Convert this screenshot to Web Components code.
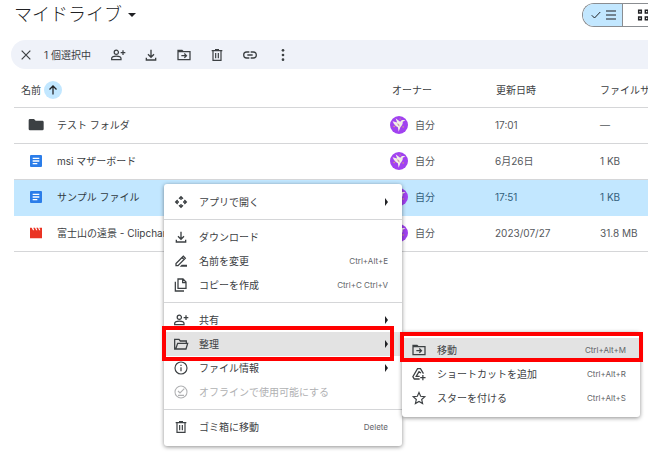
<!DOCTYPE html>
<html lang="ja">
<head>
<meta charset="utf-8">
<title>マイドライブ</title>
<style>
  html, body { margin: 0; }
  body {
    min-height: 100vh;
    background: #fff;
    color: #3c4043;
    font: 10px/16px Inter, "Noto Sans CJK JP", sans-serif;
    --ink: #3c4043;
    --line: #d5d6d8;
    --accent: #c2e7ff;
  }
</style>
</head>
<body>
<drive-page></drive-page>
<script>
const ICONS = {
  close: '<path d="M5.500 5.500l13 13M18.500 5.500l-13 13" stroke="currentColor" stroke-width="1.800" fill="none"/>',
  share: '<g fill="none" stroke="currentColor" stroke-width="1.900"><circle cx="9.500" cy="8" r="3.200"/><path d="M2.500 19v-1.600c0-2.400 4-3.600 7-3.600s7 1.200 7 3.600V19zM19.500 5v7M16 8.500h7"/></g>',
  download: '<path fill="none" stroke="currentColor" stroke-width="2" d="M12 4v11M7.500 11l4.500 4.500 4.500-4.500M5 16v3.500h14V16"/>',
  move: '<path fill="none" stroke="currentColor" stroke-width="1.900" d="M3 5h6l2 2h10v12H3zM3 7h8"/><path fill="none" stroke="currentColor" stroke-width="1.900" d="M8 13h7M12.500 9.800l3.200 3.200-3.200 3.200"/>',
  trash: '<path fill="none" stroke="currentColor" stroke-width="1.800" d="M6 6v14h12V6M4 5.500h16M9 3.800h6M10 9v8M14 9v8"/>',
  link: '<path fill="none" stroke="currentColor" stroke-width="1.900" d="M11 7.500H7a4.500 4.500 0 0 0 0 9h4M13 7.500h4a4.500 4.500 0 0 1 0 9h-4M8 12h8"/>',
  more: '<g fill="currentColor"><circle cx="12" cy="5" r="2"/><circle cx="12" cy="12" r="2"/><circle cx="12" cy="19" r="2"/></g>',
  check: '<path fill="none" stroke="currentColor" stroke-width="2" d="M3.500 12.500l5.500 5.500L20.500 6"/>',
  list: '<path stroke="currentColor" stroke-width="2.200" d="M2 4h20M2 12h20M2 20h20"/>',
  grid: '<g fill="none" stroke="currentColor" stroke-width="2.200"><path d="M4 5h4v4H4zM14 5h4v4h-4zM4 15h4v4H4zM14 15h4v4h-4z"/></g>',
  up: '<path fill="none" stroke="currentColor" stroke-width="2.500" d="M12 21V4M5 11l7-7 7 7"/>',
  open: '<g fill="none" stroke="currentColor" stroke-width="2"><path d="M9 7l3-3 3 3M9 17l3 3 3-3M7 9l-3 3 3 3M17 9l3 3-3 3M12 4v5M12 15v5M4 12h5M15 12h5"/></g>',
  rename: '<path fill="none" stroke="currentColor" stroke-width="1.900" d="M4.500 19v-3.200L15.500 4.800l3 3L7.500 19zM13.500 6.800l3 3"/><path d="M13 17.500h8V20.500H10z" fill="currentColor"/>',
  copy: '<path fill="none" stroke="currentColor" stroke-width="1.900" d="M7.500 3h7.500l4.500 4.500V17h-12zM14.500 3v5.500h5M3.500 7v14h13"/>',
  folderOpen: '<path fill="none" stroke="currentColor" stroke-width="1.900" d="M4 19.500H2.500V5H9l2 2.500h9V11M4 19.500 7 11h15L19.500 19.500z"/>',
  info: '<circle cx="12" cy="12" r="9" fill="none" stroke="currentColor" stroke-width="1.700"/><path d="M11.100 11h1.800v6h-1.800zM11.100 7h1.800v2h-1.800z" fill="currentColor"/>',
  offline: '<circle cx="12" cy="12" r="9" fill="none" stroke="currentColor" stroke-width="1.600"/><path fill="none" stroke="currentColor" stroke-width="1.700" d="M7.500 10.500l3 3L17 7M7.500 17h9"/>',
  shortcut: '<path fill="none" stroke="currentColor" stroke-width="1.900" d="M13 19.500H5L2.800 16 9.800 4h4.400l4.500 7.500M15 10.500l-3-2-4.200 7H13M17.800 13.500v8M13.800 17.500h8"/>',
  star: '<path fill="none" stroke="currentColor" stroke-width="1.700" d="M12 3.800l2.500 5.700 6.200.6-4.700 4.100 1.400 6.100L12 17.100l-5.400 3.200L8 14.200 3.300 10.100l6.200-.6z"/>',
  folder: '<path fill="#3c4043" d="M1 5a2 2 0 0 1 2-2h6l2.500 2.500H22a2 2 0 0 1 1.500 2v10.500a2 2 0 0 1-2 2H3a2 2 0 0 1-2-2z"/>',
  doc: '<rect x="3" y="3" width="18" height="18" rx="1.500" fill="#2b7de9"/><path stroke="#fff" stroke-width="2" d="M7 8h10M7 12h10M7 16h7"/>',
  video: '<path fill="#ea3323" d="M3 4h2.500l2 4h1.800L8 4h2.500l1.700 4H14l-1.500-4H15l1.700 4h1.800L17 4h4v16H3z"/>',
  avatar: '<circle cx="12" cy="12" r="12" fill="#a142f0"/><path fill="#f3eee6" d="M3.500 7l6 1.500L7.500 3l6 4.500 2-1.800c1.500-1 3.200-.2 5-.2l-3.500 2.300c.2 3.200-1.200 5.400-3.200 7.200L11.500 21l-1-6C8.500 14 5 11.500 3.500 7z"/><path fill="#c9a7a0" d="M9 9.500l3 1 1 3.500-2-1z"/><g fill="#e9c44e"><circle cx="17.500" cy="14.500" r=".9"/><circle cx="5.500" cy="14" r=".9"/><circle cx="13.500" cy="4" r=".8"/></g>'
};

const define = (name, css, html, setup) => {
  const template = document.createElement('template');
  template.innerHTML = `<style>*{box-sizing:border-box}button{font:inherit;color:inherit;background:none;border:0;margin:0;padding:0}${css}</style>${html}`;
  customElements.define(name, class extends HTMLElement {
    connectedCallback() {
      if (this.shadowRoot) return;
      this.attachShadow({ mode: 'open' }).append(template.content.cloneNode(true));
      if (setup) setup(this, this.shadowRoot);
    }
  });
};

define('drive-icon',
  ':host{display:block;flex:none;width:16px;height:16px} :host([size=small]){width:12px;height:12px} :host([size=large]){width:18px;height:18px} svg{display:block;width:100%;height:100%}',
  '<svg viewBox="0 0 24 24" aria-hidden="true"></svg>',
  (host, root) => { root.querySelector('svg').innerHTML = ICONS[host.getAttribute('name')]; });

define('drive-header', `
  :host{display:flex;align-items:center;justify-content:space-between;height:30px;padding-left:14px;color:#202124}
  h1{margin:0;font-size:18px;line-height:30px;font-weight:300}
  .title{display:flex;align-items:center;gap:6px}
  .caret{border:4px solid transparent;border-top-color:currentColor;border-bottom:0}
  .views{display:flex;height:24px;border:1px solid #8a8d91;border-right:0;border-radius:12px 0 0 12px;overflow:hidden}
  .views button{display:flex;align-items:center;overflow:hidden}
  .list{width:40px;padding-left:7px;gap:3px;background:var(--accent);border-right:1px solid #8a8d91!important}
  .grid{width:25px;padding-left:13px}`,
  `<button class="title"><h1>マイドライブ</h1><span class="caret"></span></button>
   <div class="views"><button class="list" aria-label="リスト" aria-pressed="true"><drive-icon name="check" size="small"></drive-icon><drive-icon name="list" size="small"></drive-icon></button><button class="grid" aria-label="グリッド"><drive-icon name="grid"></drive-icon></button></div>`);

define('selection-bar', `
  :host{display:flex;align-items:center;height:29px;margin:10px 0 0 11px;padding-left:7px;background:#eff2f9;border-radius:15px 0 0 15px;color:var(--ink)}
  .count{width:66px;margin-left:10px;white-space:nowrap}
  .tools{display:flex;gap:17px}`,
  `<button aria-label="選択を解除"><drive-icon name="close"></drive-icon></button><span class="count">1 個選択中</span>
   <div class="tools">
    <button aria-label="共有"><drive-icon name="share"></drive-icon></button>
    <button aria-label="ダウンロード"><drive-icon name="download"></drive-icon></button>
    <button aria-label="移動"><drive-icon name="move"></drive-icon></button>
    <button aria-label="削除"><drive-icon name="trash"></drive-icon></button>
    <button aria-label="リンク"><drive-icon name="link"></drive-icon></button>
    <button aria-label="その他"><drive-icon name="more"></drive-icon></button>
   </div>`);

const FILES = [
  ['folder', 'テスト フォルダ', '17:01', '—'],
  ['doc', 'msi マザーボード', '6月26日', '1 KB'],
  ['doc', 'サンプル ファイル', '17:51', '1 KB', 'selected'],
  ['video', '富士山の遠景 - Clipchamp', '2023/07/27', '31.8 MB']
];
define('file-table', `
  :host{display:block;padding-left:14px;overflow:hidden}
  table{width:100%;table-layout:fixed;border-spacing:0}
  th,td{height:36px;padding:0;border-bottom:1px solid var(--line);font-weight:400;text-align:left;white-space:nowrap}
  td{padding-bottom:1px;color:#55585c}
  th{height:39px;padding-top:3px}
  th:first-child{padding-left:7px} th:nth-child(2){padding-left:2px}
  th:nth-child(3){padding-left:1px}
  .date,.owner{width:105px} .size{width:48px}
  div{display:flex;align-items:center}
  .sort{gap:3px}
  .sort button{display:flex;align-items:center;justify-content:center;width:18px;height:18px;border-radius:50%;background:var(--accent);color:#202124}
  .name{gap:13px;padding-left:14px;color:#3c4043} .who{gap:7px}
  .selected td{background:var(--accent);border-bottom-color:var(--accent);color:#33607c}
  .selected .name{color:#303a42}`,
  `<table><thead><tr><th><div class="sort">名前 <button aria-label="昇順"><drive-icon name="up" size="small"></drive-icon></button></div></th><th class="owner">オーナー</th><th class="date">更新日時</th><th class="size">ファイルサイズ</th></tr></thead><tbody></tbody></table>`,
  (host, root) => {
    root.querySelector('tbody').innerHTML = FILES.map(([icon, name, date, size, cls = '']) =>
      `<tr class="${cls}"><td><div class="name"><drive-icon name="${icon}"></drive-icon>${name}</div></td><td><div class="who"><drive-icon name="avatar" size="large"></drive-icon>自分</div></td><td>${date}</td><td>${size}</td></tr>`).join('');
  });

define('context-menu',
  ':host{display:block;width:238px;padding:6px 0 7px;background:#fff;border-radius:3px;box-shadow:0 1px 4px rgba(0,0,0,.45)} ::slotted(hr){height:1px;margin:5px 0;border:0;background:var(--line)}',
  '<div role="menu"><slot></slot></div>');

define('menu-item', `
  :host{display:block;color:var(--ink)}
  :host([active]){background:#e3e3e3}
  button{display:flex;align-items:center;gap:10px;width:100%;height:24px;padding:0 14px 0 9px;text-align:left;white-space:nowrap}
  button:disabled{color:#b0b1b3}
  .label{flex:1}
  .keys{font:8px/16px Inter,sans-serif;color:#5f6368}
  .arrow{border:4px solid transparent;border-left:3px solid #202124;border-right:0}`,
  '<button role="menuitem"><drive-icon></drive-icon><span class="label"><slot></slot></span></button>',
  (host, root) => {
    const button = root.querySelector('button');
    root.querySelector('drive-icon').outerHTML = `<drive-icon name="${host.getAttribute('icon')}"></drive-icon>`;
    button.disabled = host.hasAttribute('disabled');
    if (host.hasAttribute('keys')) button.insertAdjacentHTML('beforeend', `<span class="keys">${host.getAttribute('keys')}</span>`);
    if (host.hasAttribute('submenu')) button.insertAdjacentHTML('beforeend', '<span class="arrow"></span>');
  });

define('drive-page', `
  :host{display:block;position:relative;min-height:100vh;padding-right:2px;overflow:hidden}
  context-menu,.mark{position:absolute}
  .main{left:164px;top:184px} .sub{left:402px;top:332px}
  .mark{border:4px solid #f00;pointer-events:none;box-sizing:border-box}
  .mark.one{left:162px;top:326px;width:232px;height:35px}
  .mark.two{left:400px;top:332px;width:243px;height:30px}`,
  `<drive-header></drive-header><selection-bar></selection-bar><file-table></file-table>
   <context-menu class="main">
    <menu-item icon="open" submenu>アプリで開く</menu-item><hr>
    <menu-item icon="download">ダウンロード</menu-item>
    <menu-item icon="rename" keys="Ctrl+Alt+E">名前を変更</menu-item>
    <menu-item icon="copy" keys="Ctrl+C Ctrl+V">コピーを作成</menu-item><hr>
    <menu-item icon="share" submenu>共有</menu-item>
    <menu-item icon="folderOpen" submenu active>整理</menu-item>
    <menu-item icon="info" submenu>ファイル情報</menu-item>
    <menu-item icon="offline" disabled>オフラインで使用可能にする</menu-item><hr>
    <menu-item icon="trash" keys="Delete">ゴミ箱に移動</menu-item>
   </context-menu>
   <context-menu class="sub">
    <menu-item icon="move" keys="Ctrl+Alt+M" active>移動</menu-item>
    <menu-item icon="shortcut" keys="Ctrl+Alt+R">ショートカットを追加</menu-item>
    <menu-item icon="star" keys="Ctrl+Alt+S">スターを付ける</menu-item>
   </context-menu>
   <div class="mark one"></div><div class="mark two"></div>`);
</script>
</body>
</html>
